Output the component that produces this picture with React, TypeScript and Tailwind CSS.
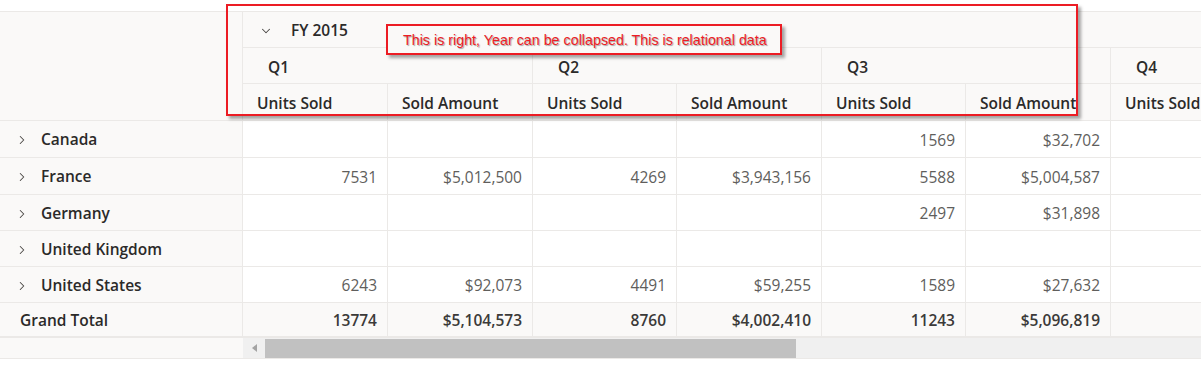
import { ChevronDown, ChevronRight } from "lucide-react";

type Row = { name: string; values: string[]; h: string };

const rows: Row[] = [
  { name: "Canada", values: ["", "", "", "", "1569", "$32,702", ""], h: "h-[37px]" },
  { name: "France", values: ["7531", "$5,012,500", "4269", "$3,943,156", "5588", "$5,004,587", ""], h: "h-[37px]" },
  { name: "Germany", values: ["", "", "", "", "2497", "$31,898", ""], h: "h-[36px]" },
  { name: "United Kingdom", values: ["", "", "", "", "", "", ""], h: "h-[36px]" },
  { name: "United States", values: ["6243", "$92,073", "4491", "$59,255", "1589", "$27,632", ""], h: "h-[36px]" },
];

const totals = ["13774", "$5,104,573", "8760", "$4,002,410", "11243", "$5,096,819", ""];
const measures = ["Units Sold", "Sold Amount", "Units Sold", "Sold Amount", "Units Sold", "Sold Amount", "Units Sold"];
const grid = "grid grid-cols-[243px_145px_145px_144px_145px_144px_145px_145px]";

export default function App() {
  return (
    <div className="relative w-[1201px] h-[374px] overflow-hidden bg-white font-['Open_Sans',sans-serif] text-[#2b2a29]">
      <div className="h-[11px]" />
      <div className="w-[1300px] border-t border-[#ebe9e7]">
        {/* header */}
        <div className={`${grid} bg-[#faf9f8] text-[15.5px] font-semibold`}>
          <div className="row-span-3 border-r border-b border-[#ebe9e7]" />
          <div className="col-span-7 h-[36px] flex items-center pt-[3px] pl-[16px] gap-[18px] border-b border-[#ebe9e7]">
            <ChevronDown size={14} strokeWidth={1.75} className="text-[#484644]" />
            <span>FY 2015</span>
          </div>
          <div className="col-span-2 h-[36px] flex items-center pt-[5px] pl-[25px] border-r border-b border-[#ebe9e7]">Q1</div>
          <div className="col-span-2 h-[36px] flex items-center pt-[5px] pl-[25px] border-r border-b border-[#ebe9e7]">Q2</div>
          <div className="col-span-2 h-[36px] flex items-center pt-[5px] pl-[25px] border-r border-b border-[#ebe9e7]">Q3</div>
          <div className="col-span-1 h-[36px] flex items-center pt-[5px] pl-[25px] border-b border-[#ebe9e7]">Q4</div>
          {measures.map((m, i) => (
            <div key={i} className="h-[37px] flex items-center pt-[3px] pl-[14px] whitespace-nowrap border-r border-b border-[#ebe9e7]">
              {m}
            </div>
          ))}
        </div>

        {/* body */}
        {rows.map((r) => (
          <div key={r.name} className={`${grid} ${r.h}`}>
            <div className="flex items-center pt-[2px] pl-[15px] gap-[12px] bg-[#faf9f8] border-r border-b border-[#ebe9e7] text-[15.5px] font-semibold">
              <ChevronRight size={14} strokeWidth={1.75} className="text-[#484644]" />
              <span>{r.name}</span>
            </div>
            {r.values.map((v, i) => (
              <div key={i} className="flex items-center justify-end pt-[3px] pr-[10px] border-r border-b border-[#ebe9e7] text-[15.5px] text-[#605e5c]">
                {v}
              </div>
            ))}
          </div>
        ))}
        <div className={`${grid} h-[35px] bg-[#faf9f8] text-[15.5px] font-semibold`}>
          <div className="flex items-center pt-[3px] pl-[20px] border-r border-b-[2px] border-[#ebe9e7]">Grand Total</div>
          {totals.map((v, i) => (
            <div key={i} className="flex items-center justify-end pt-[3px] pr-[10px] border-r border-b-[2px] border-[#ebe9e7] text-[#3b3a39]">
              {v}
            </div>
          ))}
        </div>

        {/* horizontal scrollbar */}
        <div className="flex h-[21px] border-b border-[#ebe9e7]">
          <div className="w-[243px] bg-[#faf9f8]" />
          <div className="flex-1 flex items-center bg-[#f0f0f0]">
            <div className="w-[22px] flex items-center justify-center">
              <span className="w-0 h-0 border-y-[4px] border-y-transparent border-r-[5px] border-r-[#a3a3a3]" />
            </div>
            <div className="w-[531px] h-[19px] bg-[#c1c1c1]" />
          </div>
        </div>
      </div>

      {/* annotation overlay */}
      <div className="absolute left-[226px] top-[4px] w-[852px] h-[112px] border-2 border-[#ec1c24] shadow-[3px_3px_3px_rgba(0,0,0,0.35)]" />
      <div className="absolute left-[386px] top-[24px] w-[396px] h-[31px] border-2 border-[#ec1c24] bg-[#faf9f8] shadow-[3px_3px_3px_rgba(0,0,0,0.35)] flex items-center pt-[2px] pl-[15px] font-['Liberation_Sans',Arial,sans-serif] text-[14.3px] whitespace-nowrap text-[#ee1c25] [text-shadow:1px_1px_1px_rgba(0,0,0,0.35)]">
        This is right, Year can be collapsed. This is relational data
      </div>
    </div>
  );
}
